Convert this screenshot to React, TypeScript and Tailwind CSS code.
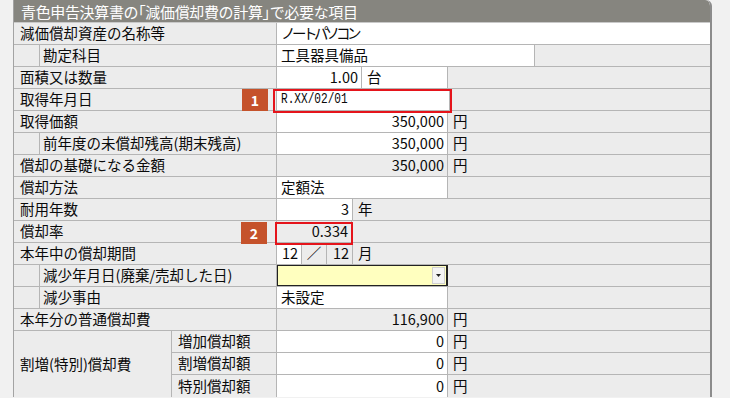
import React from "react";

const LINE = "border-[#b5b5b5]";

function Label({ text, indent, width = 263 }: { text: React.ReactNode; indent?: boolean; width?: number }) {
  if (indent) {
    return (
      <>
        <div className={`w-[26px] h-full shrink-0 border-r ${LINE}`} />
        <div
          className={`h-full shrink-0 flex items-center pl-[3px] border-r ${LINE} whitespace-nowrap`}
          style={{ width: width - 26 }}
        >
          {text}
        </div>
      </>
    );
  }
  return (
    <div
      className={`h-full shrink-0 flex items-center pl-[6px] border-r ${LINE} whitespace-nowrap`}
      style={{ width }}
    >
      {text}
    </div>
  );
}

function Row({ children, last }: { children: React.ReactNode; last?: boolean }) {
  return (
    <div className={`flex h-[22px] ${last ? "" : "border-b"} ${LINE} bg-[#ececec]`}>{children}</div>
  );
}

function Cell({
  w,
  children,
  white,
  align = "left",
  grow,
  className = "",
}: {
  w?: number;
  children?: React.ReactNode;
  white?: boolean;
  align?: "left" | "right" | "center";
  grow?: boolean;
  className?: string;
}) {
  const a = align === "right" ? "justify-end pr-[3px]" : align === "center" ? "justify-center" : "justify-start pl-[4px]";
  return (
    <div
      className={`h-full flex items-center whitespace-nowrap ${a} ${white ? "bg-white" : ""} ${
        grow ? "flex-1" : `shrink-0 border-r ${LINE}`
      } ${className}`}
      style={w ? { width: w } : undefined}
    >
      {children}
    </div>
  );
}

function Unit({ children }: { children: React.ReactNode }) {
  return <div className="h-full flex-1 flex items-center pl-[5px] whitespace-nowrap">{children}</div>;
}

export default function App() {
  return (
    <div className="relative w-[730px] h-[398px] overflow-hidden bg-[#f1f1f1] font-['Noto_Sans_CJK_JP','Noto_Sans',sans-serif] text-[14.5px] leading-none text-[#0a0a0a]">
      <div className="ml-[13px] w-[699px] border-l border-l-[#a3a3a3] border-r-2 border-r-[#8c8c8c] rounded-tr-[6px] overflow-hidden">
        <div className="h-[23px] bg-[#86857f] border-b border-[#c9c9c9] flex items-center pl-[7px] text-white text-[15px] tracking-[-0.35px] rounded-tr-[5px]">
          青色申告決算書の｢減価償却費の計算｣で必要な項目
        </div>

        <Row>
          <Label text="減価償却資産の名称等" />
          <Cell grow white>
            <span className="tracking-[-3.5px]">ノートパソコン</span>
          </Cell>
        </Row>
        <Row>
          <Label text="勘定科目" indent />
          <Cell w={258} white>工具器具備品</Cell>
          <Cell grow />
        </Row>
        <Row>
          <Label text="面積又は数量" />
          <Cell w={85} white align="right">1.00</Cell>
          <Cell w={86} white className="pl-[5px]">台</Cell>
          <Cell grow />
        </Row>
        <Row>
          <Label text="取得年月日" />
          <Cell w={173} white>
            <span className="inline-block origin-left scale-x-[0.74] font-['Liberation_Mono',monospace] text-[15px]">
              R.XX/02/01
            </span>
          </Cell>
          <Cell grow />
        </Row>
        <Row>
          <Label text="取得価額" />
          <Cell w={171} white align="right">350,000</Cell>
          <Unit>円</Unit>
        </Row>
        <Row>
          <Label text="前年度の未償却残高(期末残高)" indent />
          <Cell w={171} white align="right">350,000</Cell>
          <Unit>円</Unit>
        </Row>
        <Row>
          <Label text="償却の基礎になる金額" />
          <Cell w={171} align="right">350,000</Cell>
          <Unit>円</Unit>
        </Row>
        <Row>
          <Label text="償却方法" />
          <Cell w={171} white>定額法</Cell>
          <Cell grow />
        </Row>
        <Row>
          <Label text="耐用年数" />
          <Cell w={76} white align="right">3</Cell>
          <Unit>年</Unit>
        </Row>
        <Row>
          <Label text="償却率" />
          <Cell w={75} align="right">0.334</Cell>
          <Cell grow />
        </Row>
        <Row>
          <Label text="本年中の償却期間" />
          <Cell w={25} white align="right">12</Cell>
          <Cell w={25} align="center">／</Cell>
          <Cell w={26} align="right">12</Cell>
          <Unit>月</Unit>
        </Row>
        <Row>
          <Label text="減少年月日(廃棄/売却した日)" indent />
          <div className="w-[171px] h-full shrink-0 bg-[#ffffbf] border border-[#222] border-r-2 flex justify-end items-stretch p-[1px]">
            <div className="w-[13px] bg-[#f4f4f4] border border-[#d0d0d0] flex items-center justify-center">
              <svg width="5" height="3" viewBox="0 0 5 3">
                <path d="M0 0 L5 0 L2.5 3 Z" fill="#222" />
              </svg>
            </div>
          </div>
          <Cell grow />
        </Row>
        <Row>
          <Label text="減少事由" indent />
          <Cell w={171} white>未設定</Cell>
          <Cell grow />
        </Row>
        <Row>
          <Label text="本年分の普通償却費" />
          <Cell w={171} align="right">116,900</Cell>
          <Unit>円</Unit>
        </Row>

        <div className={`flex ${LINE}`}>
          <div className={`w-[158px] shrink-0 flex items-center pl-[6px] bg-[#ececec] border-r ${LINE} whitespace-nowrap`}>
            割増(特別)償却費
          </div>
          <div className="flex-1">
            {["増加償却額", "割増償却額", "特別償却額"].map((t, i) => (
              <Row key={t} last={i === 2}>
                <Label text={t} width={105} />
                <Cell w={171} white align="right">0</Cell>
                <Unit>円</Unit>
              </Row>
            ))}
          </div>
        </div>
      </div>

      {/* marker 1 */}
      <div className="absolute left-[242px] top-[89px] w-[26px] h-[22px] bg-[#c5522b] text-white font-bold text-[14px] flex items-center justify-center">
        1
      </div>
      <div className="absolute left-[273px] top-[89px] w-[179px] h-[24px] border-2 border-[#e5141b]" />

      {/* marker 2 */}
      <div className="absolute left-[241px] top-[222px] w-[26px] h-[22px] bg-[#c5522b] text-white font-bold text-[14px] flex items-center justify-center">
        2
      </div>
      <div className="absolute left-[275px] top-[222px] w-[78px] h-[23px] border-2 border-[#e5141b]" />
    </div>
  );
}
